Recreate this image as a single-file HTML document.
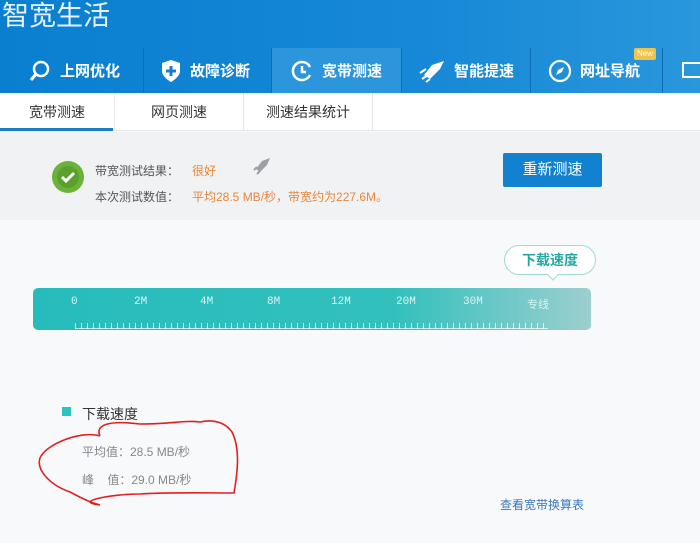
<!DOCTYPE html>
<html><head><meta charset="utf-8"><style>
*{margin:0;padding:0;box-sizing:border-box}
body{width:700px;height:543px;overflow:hidden;background:#f8f9fb;font-family:"Liberation Sans","Noto Sans CJK SC",sans-serif;position:relative}
.hdr{position:absolute;left:0;top:0;width:700px;height:93px;background:linear-gradient(90deg,#0a7fd0,#1688d6 60%,#2a97dc)}
.title{position:absolute;left:2px;top:-6px;color:#e8f3ff;font-size:27px;letter-spacing:0px}
.tab{position:absolute;top:48px;height:45px;color:#fff;font-size:15px;display:flex;align-items:center;font-weight:600}
.sep{position:absolute;top:48px;width:1px;height:45px;background:#0b6db5}
.sub{position:absolute;top:93px;left:0;width:700px;height:38px;background:#fff;border-bottom:1px solid #e6e8eb}
.st{position:absolute;top:0;height:38px;line-height:38px;font-size:14px;color:#333;text-align:center}
.ss{position:absolute;top:0;width:1px;height:38px;background:#e4e6e8}
.panel{position:absolute;top:132px;left:0;width:700px;height:88px;background:#f1f2f4}
.t{position:absolute;font-size:12px;white-space:nowrap}
</style></head><body>
<div class="hdr">
<div class="title">智宽生活</div>
<div style="position:absolute;left:272px;top:48px;width:129px;height:45px;background:#2c96dc"></div>
<div class="sep" style="left:143px"></div><div class="sep" style="left:271px"></div><div class="sep" style="left:401px"></div><div class="sep" style="left:530px"></div><div class="sep" style="left:662px"></div>
<div class="tab" style="left:28px"><svg width="24" height="24" viewBox="0 0 24 24" style="margin-right:8px"><circle cx="13" cy="10" r="7" fill="none" stroke="#fff" stroke-width="2.5"/><path d="M8 15L3 21" stroke="#fff" stroke-width="3"/></svg>上网优化</div>
<div class="tab" style="left:160px"><svg width="22" height="24" viewBox="0 0 22 24" style="margin-right:8px"><path d="M11 1L20 4V12C20 18 11 23 11 23C11 23 2 18 2 12V4Z" fill="#fff"/><path d="M11 7V17M6 12H16" stroke="#1a7cc4" stroke-width="3"/></svg>故障诊断</div>
<div class="tab" style="left:290px"><svg width="24" height="24" viewBox="0 0 24 24" style="margin-right:8px"><path d="M20 8A9 9 0 1 0 20 16" fill="none" stroke="#fff" stroke-width="2.5"/><path d="M12 7V13H16" fill="none" stroke="#fff" stroke-width="2.5"/></svg>宽带测速</div>
<div class="tab" style="left:418px"><svg width="28" height="24" viewBox="0 0 28 24" style="margin-right:8px"><path d="M26 2L14 6L6 16L12 20L22 10Z" fill="#fff"/><path d="M2 14L8 10M4 20L10 16M8 23L12 20" stroke="#fff" stroke-width="2"/></svg>智能提速</div>
<div class="tab" style="left:548px"><svg width="24" height="24" viewBox="0 0 24 24" style="margin-right:8px"><circle cx="12" cy="12" r="10" fill="none" stroke="#fff" stroke-width="2.2"/><path d="M16 8L10 11L8 16L14 13Z" fill="#fff"/></svg>网址导航</div>
<div style="position:absolute;left:634px;top:48px;width:22px;height:12px;background:#f1c24a;border-radius:2px;font-size:8px;color:#fff;text-align:center;line-height:12px">New</div>
<div style="position:absolute;left:682px;top:62px;width:18px;height:16px;border:2px solid #fff;border-right:none"></div>
</div>
<div class="sub">
<div class="st" style="left:0;width:114px">宽带测速</div><div style="position:absolute;left:0;top:35px;width:113px;height:3px;background:#1a7cc4"></div>
<div class="ss" style="left:114px"></div>
<div class="st" style="left:115px;width:128px">网页测速</div><div class="ss" style="left:243px"></div>
<div class="st" style="left:244px;width:128px">测速结果统计</div><div class="ss" style="left:372px"></div>
</div>
<div class="panel"></div>
<svg style="position:absolute;left:51px;top:160px" width="34" height="34"><circle cx="17" cy="17" r="16" fill="#6cb13a"/><circle cx="17" cy="17" r="11" fill="#5aa12b"/><path d="M11 17L15 21L23 13" fill="none" stroke="#fff" stroke-width="3"/></svg>
<div class="t" style="left:95px;top:162px;color:#555">带宽测试结果：</div>
<div class="t" style="left:192px;top:162px;color:#e8863a">很好</div>
<svg style="position:absolute;left:252px;top:156px" width="20" height="20" viewBox="0 0 20 20"><path d="M18 2L10 5L4 13L8 16L15 9Z" fill="#9aa0a6"/><path d="M2 14L5 11M5 18L8 15" stroke="#9aa0a6" stroke-width="2"/></svg>
<div class="t" style="left:95px;top:188px;color:#555">本次测试数值：</div>
<div class="t" style="left:192px;top:188px;color:#e8863a">平均28.5 MB/秒，带宽约为227.6M。</div>
<div style="position:absolute;left:503px;top:153px;width:99px;height:34px;background:#1281cf;border-radius:2px;color:#fff;font-size:15px;text-align:center;line-height:34px">重新测速</div>
<div style="position:absolute;left:504px;top:245px;width:92px;height:30px;border:1px solid #9fdad6;border-radius:15px;background:#fff;color:#23a7a3;font-size:14px;font-weight:bold;text-align:center;line-height:28px">下载速度</div>
<div style="position:absolute;left:549px;top:271px;width:8px;height:8px;background:#fff;border-right:1px solid #9fdad6;border-bottom:1px solid #9fdad6;transform:rotate(45deg)"></div>
<div style="position:absolute;left:33px;top:288px;width:558px;height:42px;border-radius:5px;background:linear-gradient(90deg,#27bcbc,#33c0bd 65%,#9ccfcf)"></div>
<div style="position:absolute;left:33px;top:296px;width:558px;font-family:'Liberation Mono',monospace;font-size:11px;color:#d8f4f2">
<span style="position:absolute;left:38px">0</span><span style="position:absolute;left:101px">2M</span><span style="position:absolute;left:167px">4M</span><span style="position:absolute;left:234px">8M</span><span style="position:absolute;left:298px">12M</span><span style="position:absolute;left:363px">20M</span><span style="position:absolute;left:430px">30M</span><span style="position:absolute;left:494px;font-family:'Noto Sans CJK SC',sans-serif">专线</span></div>
<div style="position:absolute;left:75px;top:323px;width:473px;height:6px;background:repeating-linear-gradient(90deg,rgba(255,255,255,.8) 0 1px,transparent 1px 6px);border-bottom:1px solid rgba(255,255,255,.7)"></div>
<div style="position:absolute;left:62px;top:407px;width:9px;height:9px;background:#2cc4c0"></div>
<div class="t" style="left:82px;top:404px;font-size:14px;color:#333">下载速度</div>
<div class="t" style="left:82px;top:443px;color:#888">平均值：28.5 MB/秒</div>
<div class="t" style="left:82px;top:471px;color:#888">峰&nbsp;&nbsp;&nbsp;&nbsp;值：29.0 MB/秒</div>
<div class="t" style="left:500px;top:496px;color:#3a78b8">查看宽带换算表</div>
<svg style="position:absolute;left:0;top:0" width="700" height="543"><path d="M100 436C95 425 108 420 140 424C170 424 185 420 200 422C218 418 228 426 232 432C240 448 238 470 234 493C205 493 170 492 140 494C110 494 72 502 100 505M100 436C80 430 45 445 40 458C36 470 50 485 70 492C85 500 92 503 100 505" fill="none" stroke="#e02020" stroke-width="1.6"/></svg>
</body></html>
